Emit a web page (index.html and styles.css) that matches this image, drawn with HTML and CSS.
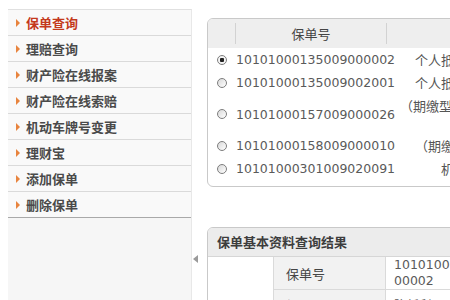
FILE: index.html
```html
<!DOCTYPE html>
<html lang="zh-CN">
<head>
<meta charset="utf-8">
<title>保单查询</title>
<link rel="stylesheet" href="styles.css">
</head>
<body>
<div class="page">
  <nav class="side">
    <ul class="menu">
      <li class="item active"><span class="mark"></span>保单查询</li>
      <li class="item"><span class="mark"></span>理赔查询</li>
      <li class="item"><span class="mark"></span>财产险在线报案</li>
      <li class="item"><span class="mark"></span>财产险在线索赔</li>
      <li class="item"><span class="mark"></span>机动车牌号变更</li>
      <li class="item"><span class="mark"></span>理财宝</li>
      <li class="item"><span class="mark"></span>添加保单</li>
      <li class="item last"><span class="mark"></span>删除保单</li>
    </ul>
  </nav>
  <div class="splitter"><span class="arrow"></span></div>
  <main class="main">
    <section class="box list">
      <div class="list-head">
        <div class="hc hc1"></div>
        <div class="hc hc2">保单号</div>
        <div class="hc hc3"></div>
      </div>
      <div class="list-body">
        <div class="cell rc"><input class="radio" type="radio" name="p" checked></div>
        <div class="cell num">10101000135009000002</div>
        <div class="cell name">个人抵押贷款房屋保险</div>

        <div class="cell rc"><input class="radio" type="radio" name="p"></div>
        <div class="cell num">10101000135009002001</div>
        <div class="cell name">个人抵押贷款房屋保险</div>

        <div class="cell rc"><input class="radio" type="radio" name="p"></div>
        <div class="cell num">10101000157009000026</div>
        <div class="cell name multi">（期缴型）家庭财产两全保险<br>（A款）</div>

        <div class="cell rc"><input class="radio" type="radio" name="p"></div>
        <div class="cell num">10101000158009000010</div>
        <div class="cell name">（期缴型）意外伤害险</div>

        <div class="cell rc"><input class="radio" type="radio" name="p"></div>
        <div class="cell num">10101000301009020091</div>
        <div class="cell name">机动车辆保险</div>
      </div>
    </section>

    <section class="box detail">
      <div class="detail-head">保单基本资料查询结果</div>
      <table class="detail-table">
        <tr>
          <td class="blank" rowspan="2"></td>
          <td class="label">保单号</td>
          <td class="value">10101000135009000002</td>
        </tr>
        <tr>
          <td class="label">投保人</td>
          <td class="value">陈新利</td>
        </tr>
      </table>
    </section>
  </main>
</div>
</body>
</html>
```

FILE: styles.css
```css
html, body {
  margin: 0;
  padding: 0;
  background: #ffffff;
}
body {
  width: 450px;
  height: 300px;
  overflow: hidden;
  font-family: "DejaVu Sans", "Noto Sans CJK SC", sans-serif;
  font-size: 13px;
  color: #555555;
}
.page {
  display: flex;
  height: 300px;
  padding: 9px 0 0 8px;
  box-sizing: border-box;
}

/* sidebar */
.side {
  flex: none;
  width: 183px;
  background: #f6f6f6;
  border-top: 1px solid #e0e0e0;
  border-right: 1px solid #e8e8e8;
}
.menu {
  list-style: none;
  margin: 0;
  padding: 0;
}
.item {
  display: flex;
  align-items: center;
  height: 25px;
  padding-left: 8px;
  border-bottom: 1px solid #dadada;
  background: #f9f9f9;
  font-family: "Noto Sans CJK SC", sans-serif;
  font-weight: 700;
  font-size: 13px;
  color: #4a4a4a;
  white-space: nowrap;
}
.item.active {
  color: #c4391c;
}
.item.last {
  border-bottom-color: #a9a9a9;
}
.mark {
  width: 0;
  height: 0;
  border-left: 4px solid #e8843e;
  border-top: 4px solid transparent;
  border-bottom: 4px solid transparent;
  margin-right: 6px;
}

/* splitter */
.splitter {
  flex: none;
  width: 15px;
  padding-top: 246px;
  box-sizing: border-box;
}
.arrow {
  display: block;
  width: 0;
  height: 0;
  margin-left: 1px;
  border-right: 5px solid #9a9a9a;
  border-top: 4px solid transparent;
  border-bottom: 4px solid transparent;
}

/* main */
.main {
  flex: none;
  width: 360px;
  padding-top: 9px;
}
.box {
  width: 340px;
  border: 1px solid #c9c9c9;
  border-radius: 6px;
  overflow: hidden;
  background: #ffffff;
}

.list-head {
  display: flex;
  height: 29px;
  background: #eeeeee;
  color: #444444;
  font-family: "Noto Sans CJK SC", sans-serif;
}
.hc {
  flex: none;
  height: 21px;
  margin-top: 4px;
  line-height: 21px;
  text-align: center;
  white-space: nowrap;
}
.hc1 { width: 27px; }
.hc2 {
  width: 150px;
  border-left: 1px solid #d2d2d2;
}
.hc3 {
  width: 160px;
  border-left: 1px solid #d2d2d2;
}

.list-body {
  display: grid;
  grid-template-columns: 28px 164px 160px;
  padding-bottom: 6px;
}
.cell {
  padding: 3px 0;
  line-height: 17px;
  white-space: nowrap;
}
.rc {
  display: flex;
  align-items: center;
  justify-content: center;
}
.num {
  display: flex;
  align-items: center;
  font-size: 12.5px;
  color: #5a5a5a;
}
.name {
  display: flex;
  flex-direction: column;
  justify-content: center;
  text-align: center;
  font-family: "Noto Sans CJK SC", sans-serif;
  color: #555555;
}
.radio {
  appearance: none;
  -webkit-appearance: none;
  margin: 0;
  width: 10px;
  height: 10px;
  border: 1px solid #7d7d7d;
  border-radius: 50%;
  background: linear-gradient(135deg, #d8d8d8, #ffffff);
  box-sizing: border-box;
}
.radio:checked {
  background: radial-gradient(circle, #222222 0, #222222 2px, #f4f4f4 2.5px);
}

/* detail */
.detail {
  margin-top: 40px;
}
.detail-head {
  height: 28px;
  line-height: 28px;
  padding-left: 9px;
  background: #ececec;
  border-bottom: 1px solid #d6d6d6;
  font-family: "Noto Sans CJK SC", sans-serif;
  font-weight: 700;
  color: #3d3d3d;
}
.detail-table {
  border-collapse: collapse;
}
.detail-table td {
  padding: 0;
  border: 1px solid #dadada;
  vertical-align: middle;
}
.blank {
  width: 65px;
  border-left: none !important;
  border-top: none !important;
}
.label {
  width: 99px;
  height: 31px;
  padding-left: 12px !important;
  background: #f2f2f2;
  font-family: "Noto Sans CJK SC", sans-serif;
  color: #444444;
  border-top: none !important;
}
.value {
  width: 122px;
  padding: 0 8px !important;
  line-height: 16px;
  font-size: 12.5px;
  word-break: break-all;
  color: #5a5a5a;
  font-family: "DejaVu Sans", "Noto Sans CJK SC", sans-serif;
  border-top: none !important;
}
```
